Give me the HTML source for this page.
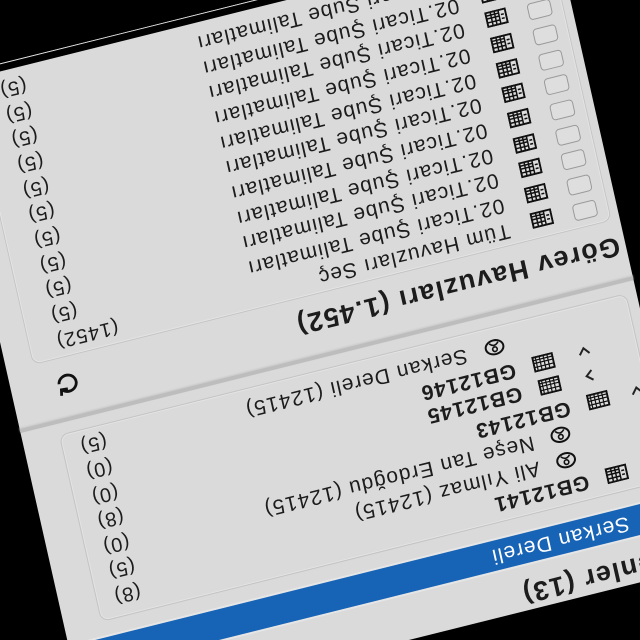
<!DOCTYPE html>
<html><head><meta charset="utf-8">
<style>
html,body{margin:0;padding:0;background:#000;width:640px;height:640px;overflow:hidden;}
#w{position:relative;width:640px;height:640px;overflow:hidden;background:#000;}
#c{position:absolute;left:640px;top:640px;width:0;height:0;transform-origin:0 0;transform:matrix(-0.970,0.242,-0.220,-0.975,0,0);}
#p{position:absolute;left:-73px;top:0;width:0;height:0;font-family:"Liberation Sans",sans-serif;color:#1c1c1c;}
#p div,#p svg{position:absolute;}
.bg{left:0;top:56px;width:632px;height:651px;background:#dadada;}
.h{font-weight:bold;font-size:27px;line-height:34px;letter-spacing:1.5px;white-space:nowrap;}
.t{font-size:21px;line-height:26px;letter-spacing:1.1px;white-space:nowrap;}
.b{font-weight:bold;}
.cnt{font-size:20px;line-height:26px;letter-spacing:1px;text-align:right;width:100px;left:477px;white-space:nowrap;}
.box{border:1.5px solid #c4c4c4;border-radius:9px;box-shadow:inset 0 0 0 1px #e4e4e4;}
.cb{width:22px;height:15px;border:1.5px solid #9a9a9a;border-radius:4px;background:#dedede;}
</style></head><body>
<div id="w">
<div id="c"><div id="p">
<div class="bg"></div>

<div class="h" style="left:-220px;width:398px;text-align:right;top:55px;">Eğitmenler (13)</div>

<div style="left:10px;top:100px;width:604px;height:34px;border-radius:3px;background:#e6e6e6;"></div>
<div style="left:12px;top:102px;width:600px;height:30px;background:#1763b6;"></div>
<div class="t" style="left:58px;top:104px;color:#fff;">Serkan Dereli</div>

<div class="box" style="left:10px;top:148px;width:583px;height:190px;"></div>

<svg style="left:14px;top:160px" width="14" height="14" viewBox="0 0 14 14"><polyline points="2,4 7,10 12,4" fill="none" stroke="#222" stroke-width="2"/></svg>
<svg style="left:48px;top:159px" width="22" height="16" viewBox="0 0 22 16"><rect x="1" y="1" width="20" height="14" fill="#ddd" stroke="#111" stroke-width="2"/><path d="M8 1V15M12 1V15M16 1V15M8 5H21M8 9H21M8 12H21M3 6H6M3 10H6" stroke="#111" stroke-width="1.5"/></svg>
<div class="t b" style="left:88px;top:154px;">GB12141</div>

<svg style="left:95px;top:184px" width="21" height="17" viewBox="0 0 21 17"><ellipse cx="10.5" cy="8.5" rx="9" ry="7" fill="none" stroke="#111" stroke-width="2"/><circle cx="10.5" cy="6.5" r="2.3" fill="none" stroke="#111" stroke-width="1.6"/><path d="M6 13Q10.5 8 15 13" fill="none" stroke="#111" stroke-width="1.6"/></svg>
<div class="t" style="left:133px;top:179px;">Ali Yılmaz (12415)</div>

<svg style="left:95px;top:210px" width="21" height="17" viewBox="0 0 21 17"><ellipse cx="10.5" cy="8.5" rx="9" ry="7" fill="none" stroke="#111" stroke-width="2"/><circle cx="10.5" cy="6.5" r="2.3" fill="none" stroke="#111" stroke-width="1.6"/><path d="M6 13Q10.5 8 15 13" fill="none" stroke="#111" stroke-width="1.6"/></svg>
<div class="t" style="left:133px;top:205px;">Neşe Tan Erdoğdu (12415)</div>

<svg style="left:14px;top:236px" width="14" height="14" viewBox="0 0 14 14"><polyline points="2,4 7,10 12,4" fill="none" stroke="#222" stroke-width="2"/></svg>
<svg style="left:50px;top:235px" width="22" height="16" viewBox="0 0 22 16"><rect x="1" y="1" width="20" height="14" fill="#ddd" stroke="#111" stroke-width="2"/><path d="M6 1V15M10 1V15M14 1V15M18 1V15M1 5H21M1 9H21M1 12H21" stroke="#111" stroke-width="1.2"/></svg>
<div class="t b" style="left:90px;top:230px;">GB12143</div>

<svg style="left:57px;top:262px" width="14" height="14" viewBox="0 0 14 14"><polyline points="4,2 10,7 4,12" fill="none" stroke="#222" stroke-width="2"/></svg>
<svg style="left:94px;top:261px" width="22" height="16" viewBox="0 0 22 16"><rect x="1" y="1" width="20" height="14" fill="#ddd" stroke="#111" stroke-width="2"/><path d="M6 1V15M10 1V15M14 1V15M18 1V15M1 5H21M1 9H21M1 12H21" stroke="#111" stroke-width="1.2"/></svg>
<div class="t b" style="left:134px;top:256px;">GB12145</div>

<svg style="left:57px;top:287px" width="14" height="14" viewBox="0 0 14 14"><polyline points="2,4 7,10 12,4" fill="none" stroke="#222" stroke-width="2"/></svg>
<svg style="left:95px;top:285px" width="22" height="16" viewBox="0 0 22 16"><rect x="1" y="1" width="20" height="14" fill="#ddd" stroke="#111" stroke-width="2"/><path d="M6 1V15M10 1V15M14 1V15M18 1V15M1 5H21M1 9H21M1 12H21" stroke="#111" stroke-width="1.2"/></svg>
<div class="t b" style="left:135px;top:280px;">GB12146</div>

<svg style="left:140px;top:311px" width="21" height="17" viewBox="0 0 21 17"><ellipse cx="10.5" cy="8.5" rx="9" ry="7" fill="none" stroke="#111" stroke-width="2"/><circle cx="10.5" cy="6.5" r="2.3" fill="none" stroke="#111" stroke-width="1.6"/><path d="M6 13Q10.5 8 15 13" fill="none" stroke="#111" stroke-width="1.6"/></svg>
<div class="t" style="left:179px;top:306px;">Serkan Dereli (12415)</div>

<div class="cnt" style="top:156px;">(8)</div>
<div class="cnt" style="top:182px;">(5)</div>
<div class="cnt" style="top:207px;">(0)</div>
<div class="cnt" style="top:233px;">(8)</div>
<div class="cnt" style="top:258px;">(0)</div>
<div class="cnt" style="top:284px;">(0)</div>
<div class="cnt" style="top:310px;">(5)</div>

<div style="left:0;top:351px;width:632px;height:4px;background:#bdbdbd;box-shadow:0 1px 2px #c8c8c8;"></div>

<div class="h" style="left:6px;top:371px;">Görev Havuzları (1.452)</div>
<svg style="left:562px;top:376px" width="26" height="24" viewBox="0 0 24 22"><path d="M18.5 6.5A8 7.5 0 1 0 20 12" fill="none" stroke="#111" stroke-width="2.6"/><polyline points="13,6 19,6.5 20,1" fill="none" stroke="#111" stroke-width="2.6"/></svg>

<div class="box" style="left:8px;top:414px;width:595px;height:300px;border-bottom:none;border-bottom-left-radius:0;border-bottom-right-radius:0;"></div>

<div class="cb" style="left:20px;top:422px;"></div>
<svg style="left:65px;top:425px" width="22" height="16" viewBox="0 0 22 16"><rect x="1" y="1" width="20" height="14" fill="#ddd" stroke="#111" stroke-width="2"/><path d="M8 1V15M12 1V15M16 1V15M8 5H21M8 9H21M8 12H21M3 6H6M3 10H6" stroke="#111" stroke-width="1.5"/></svg>
<div class="t" style="left:110px;top:417px;">Tüm Havuzları Seç</div>
<div class="cnt" style="top:418px;">(1452)</div>

<div class="cb" style="left:20px;top:448px;"></div><svg style="left:65px;top:451px" width="22" height="16" viewBox="0 0 22 16"><rect x="1" y="1" width="20" height="14" fill="#ddd" stroke="#111" stroke-width="2"/><path d="M8 1V15M12 1V15M16 1V15M8 5H21M8 9H21M8 12H21M3 6H6M3 10H6" stroke="#111" stroke-width="1.5"/></svg><div class="t" style="left:110px;top:443px;">02.Ticari Şube Talimatları</div><div class="cnt" style="top:444px;">(5)</div>
<div class="cb" style="left:20px;top:474px;"></div><svg style="left:65px;top:477px" width="22" height="16" viewBox="0 0 22 16"><rect x="1" y="1" width="20" height="14" fill="#ddd" stroke="#111" stroke-width="2"/><path d="M8 1V15M12 1V15M16 1V15M8 5H21M8 9H21M8 12H21M3 6H6M3 10H6" stroke="#111" stroke-width="1.5"/></svg><div class="t" style="left:110px;top:469px;">02.Ticari Şube Talimatları</div><div class="cnt" style="top:470px;">(5)</div>
<div class="cb" style="left:20px;top:499px;"></div><svg style="left:65px;top:502px" width="22" height="16" viewBox="0 0 22 16"><rect x="1" y="1" width="20" height="14" fill="#ddd" stroke="#111" stroke-width="2"/><path d="M8 1V15M12 1V15M16 1V15M8 5H21M8 9H21M8 12H21M3 6H6M3 10H6" stroke="#111" stroke-width="1.5"/></svg><div class="t" style="left:110px;top:494px;">02.Ticari Şube Talimatları</div><div class="cnt" style="top:495px;">(5)</div>
<div class="cb" style="left:20px;top:525px;"></div><svg style="left:65px;top:528px" width="22" height="16" viewBox="0 0 22 16"><rect x="1" y="1" width="20" height="14" fill="#ddd" stroke="#111" stroke-width="2"/><path d="M8 1V15M12 1V15M16 1V15M8 5H21M8 9H21M8 12H21M3 6H6M3 10H6" stroke="#111" stroke-width="1.5"/></svg><div class="t" style="left:110px;top:520px;">02.Ticari Şube Talimatları</div><div class="cnt" style="top:521px;">(5)</div>
<div class="cb" style="left:20px;top:551px;"></div><svg style="left:65px;top:554px" width="22" height="16" viewBox="0 0 22 16"><rect x="1" y="1" width="20" height="14" fill="#ddd" stroke="#111" stroke-width="2"/><path d="M8 1V15M12 1V15M16 1V15M8 5H21M8 9H21M8 12H21M3 6H6M3 10H6" stroke="#111" stroke-width="1.5"/></svg><div class="t" style="left:110px;top:546px;">02.Ticari Şube Talimatları</div><div class="cnt" style="top:547px;">(5)</div>
<div class="cb" style="left:20px;top:576px;"></div><svg style="left:65px;top:579px" width="22" height="16" viewBox="0 0 22 16"><rect x="1" y="1" width="20" height="14" fill="#ddd" stroke="#111" stroke-width="2"/><path d="M8 1V15M12 1V15M16 1V15M8 5H21M8 9H21M8 12H21M3 6H6M3 10H6" stroke="#111" stroke-width="1.5"/></svg><div class="t" style="left:110px;top:571px;">02.Ticari Şube Talimatları</div><div class="cnt" style="top:572px;">(5)</div>
<div class="cb" style="left:20px;top:602px;"></div><svg style="left:65px;top:605px" width="22" height="16" viewBox="0 0 22 16"><rect x="1" y="1" width="20" height="14" fill="#ddd" stroke="#111" stroke-width="2"/><path d="M8 1V15M12 1V15M16 1V15M8 5H21M8 9H21M8 12H21M3 6H6M3 10H6" stroke="#111" stroke-width="1.5"/></svg><div class="t" style="left:110px;top:597px;">02.Ticari Şube Talimatları</div><div class="cnt" style="top:598px;">(5)</div>
<div class="cb" style="left:20px;top:628px;"></div><svg style="left:65px;top:631px" width="22" height="16" viewBox="0 0 22 16"><rect x="1" y="1" width="20" height="14" fill="#ddd" stroke="#111" stroke-width="2"/><path d="M8 1V15M12 1V15M16 1V15M8 5H21M8 9H21M8 12H21M3 6H6M3 10H6" stroke="#111" stroke-width="1.5"/></svg><div class="t" style="left:110px;top:623px;">02.Ticari Şube Talimatları</div><div class="cnt" style="top:624px;">(5)</div>
<div class="cb" style="left:20px;top:653px;"></div><svg style="left:65px;top:656px" width="22" height="16" viewBox="0 0 22 16"><rect x="1" y="1" width="20" height="14" fill="#ddd" stroke="#111" stroke-width="2"/><path d="M8 1V15M12 1V15M16 1V15M8 5H21M8 9H21M8 12H21M3 6H6M3 10H6" stroke="#111" stroke-width="1.5"/></svg><div class="t" style="left:110px;top:648px;">02.Ticari Şube Talimatları</div><div class="cnt" style="top:649px;">(5)</div>
<div class="cb" style="left:20px;top:679px;"></div><svg style="left:65px;top:682px" width="22" height="16" viewBox="0 0 22 16"><rect x="1" y="1" width="20" height="14" fill="#ddd" stroke="#111" stroke-width="2"/><path d="M8 1V15M12 1V15M16 1V15M8 5H21M8 9H21M8 12H21M3 6H6M3 10H6" stroke="#111" stroke-width="1.5"/></svg><div class="t" style="left:110px;top:674px;">02.Ticari Şube Talimatları</div><div class="cnt" style="top:675px;">(5)</div>
</div></div>
</div>
</body></html>
